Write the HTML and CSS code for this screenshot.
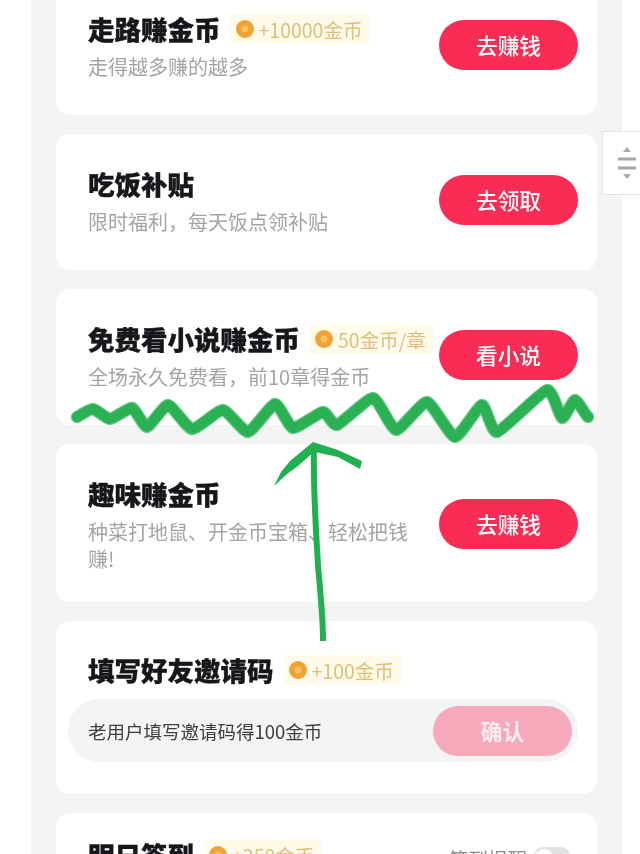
FILE: index.html
```html
<!DOCTYPE html>
<html lang="zh-CN">
<head>
<meta charset="utf-8">
<title>赚金币任务</title>
<link rel="stylesheet" href="styles.css">
</head>
<body>
<main class="panel">
  <div class="list">
    <section class="card">
      <div class="task">
        <div class="info">
          <div class="head"><h2 class="title">走路赚金币</h2><span class="tag"><i class="coin"></i>+10000金币</span></div>
          <p class="sub">走得越多赚的越多</p>
        </div>
        <button class="btn">去赚钱</button>
      </div>
    </section>
    <section class="card">
      <div class="task">
        <div class="info">
          <div class="head"><h2 class="title">吃饭补贴</h2></div>
          <p class="sub">限时福利&#xFF0C;每天饭点领补贴</p>
        </div>
        <button class="btn">去领取</button>
      </div>
    </section>
    <section class="card">
      <div class="task">
        <div class="info">
          <div class="head"><h2 class="title">免费看小说赚金币</h2><span class="tag"><i class="coin"></i>50金币/章</span></div>
          <p class="sub">全场永久免费看&#xFF0C;前10章得金币</p>
        </div>
        <button class="btn">看小说</button>
      </div>
    </section>
    <section class="card">
      <div class="task">
        <div class="info">
          <div class="head"><h2 class="title">趣味赚金币</h2></div>
          <p class="sub">种菜打地鼠、开金币宝箱、轻松把钱赚!</p>
        </div>
        <button class="btn">去赚钱</button>
      </div>
    </section>
    <section class="card card-form">
      <div class="head"><h2 class="title">填写好友邀请码</h2><span class="tag"><i class="coin"></i>+100金币</span></div>
      <div class="code">
        <span class="code-hint">老用户填写邀请码得100金币</span>
        <button class="btn btn-off">确认</button>
      </div>
    </section>
    <section class="card card-form card-sign">
      <div class="sign">
        <div class="head"><h2 class="title">明日签到</h2><span class="tag"><i class="coin"></i>+350金币</span></div>
        <div class="remind"><span>签到提醒</span><i class="switch"></i></div>
      </div>
    </section>
  </div>
</main>
<aside class="handle" aria-hidden="true">
  <svg width="26" height="40" viewBox="0 0 26 40">
    <path d="M13 4l4 5H9z" fill="#a9a9a9"/>
    <path d="M4 16h18M4 25h18" stroke="#a6a6a6" stroke-width="3"/>
    <path d="M13 36l-4-5h8z" fill="#a9a9a9"/>
  </svg>
</aside>
<svg class="scribble" width="640" height="854" viewBox="0 0 640 854" aria-hidden="true">
  <path class="zig-halo" d="M77 417S90.200 408.900 93 409S106.800 419.100 110 419S128.900 407.400 132 408S144 427.200 147 427S164.200 404.900 168 405S187.400 428.600 192 429S218.400 409.700 223 410S243.600 432.500 248 432S271.200 404.400 275 404S289 427.400 293 428S319.400 412.200 323 412S332.900 426.200 337 425S368.100 397.600 373 398S391.500 429.600 396 430S422.100 401.400 427 402S450.400 436.800 455 437S478.500 405.400 482 405S491.600 433.200 497 432S541.600 391.200 547 390S559.700 417.200 562 418S572.800 400.100 575 400S585 414 588 417"/>
  <path class="zig" d="M77 417S90.200 408.900 93 409S106.800 419.100 110 419S128.900 407.400 132 408S144 427.200 147 427S164.200 404.900 168 405S187.400 428.600 192 429S218.400 409.700 223 410S243.600 432.500 248 432S271.200 404.400 275 404S289 427.400 293 428S319.400 412.200 323 412S332.900 426.200 337 425S368.100 397.600 373 398S391.500 429.600 396 430S422.100 401.400 427 402S450.400 436.800 455 437S478.500 405.400 482 405S491.600 433.200 497 432S541.600 391.200 547 390S559.700 417.200 562 418S572.800 400.100 575 400S585 414 588 417"/>
  <path class="arrow-stem" d="M314 446C313 490 316 530 318 565C320 590 323 615 323 641"/>
  <path class="arrow-head" d="M313 442L316 450L298 466L287 474L274 486L281 472L290 461Z"/>
  <path class="arrow-head" d="M313 442L338 450L362 461L360 469L338 457L315 452Z"/>
</svg>
</body>
</html>
```
FILE: styles.css
```css
* { box-sizing: border-box; }
html, body { margin: 0; height: 854px; overflow: hidden; background: #fff; }
body { font-family: "Noto Sans CJK SC", "Noto Sans", sans-serif; position: relative; }

.panel { width: 591px; height: 854px; margin-left: 31px; padding: 0 25px; background: #f4f4f4; overflow: hidden; filter: blur(0.5px); }
.list { display: flex; flex-direction: column; gap: 19px; margin-top: -21px; }

.card { background: #fff; border-radius: 14px; min-height: 136px; padding: 32px 19px 30.5px 32px; }
.card-form { padding: 31px 19px 32px 12px; }
.card-form .head { padding-left: 20px; }
.card-sign { padding-top: 24px; }

.task { display: flex; align-items: center; gap: 20px; }
.info { flex: 1; min-width: 0; }

.head { display: flex; align-items: center; height: 36px; margin-bottom: 5.5px; }
.title { margin: 0; font-size: 26.5px; line-height: 36px; font-weight: 900; color: #16171b; white-space: nowrap; -webkit-text-stroke: 0.35px #16171b; }
.tag { display: flex; align-items: center; height: 30px; margin-left: 10px; padding: 0 7px 0 5px; background: #fffaea; font-size: 19.5px; color: #dcc07c; white-space: nowrap; }
.coin { flex: none; width: 18px; height: 18px; margin-right: 5px; border-radius: 50%; background: radial-gradient(circle, #f6c25f 0 3px, #f0a233 4px); }
.sub { margin: 0; font-size: 20px; line-height: 27px; color: #a4a4a4; }

.btn { flex: none; width: 139px; height: 50px; padding: 0; border: 0; border-radius: 25px; background: #f82c54; color: #fff; font: 500 21.7px/50px "Noto Sans CJK SC", sans-serif; }
.btn-off { background: #f7a9bc; color: #fdeef2; font-weight: 700; }

.code { display: flex; align-items: center; justify-content: space-between; height: 63px; margin-top: 11px; padding: 0 6px 0 20px; border-radius: 31.5px; background: #f4f4f4; }
.code-hint { font-size: 18.5px; color: #3d3d3d; }

.sign { display: flex; align-items: center; justify-content: space-between; }
.sign .head { margin-bottom: 0; }
.remind { display: flex; align-items: center; gap: 6px; margin: 6px 7px 0 0; font-size: 19.5px; color: #8a8a8a; }
.switch { width: 38px; height: 22px; border-radius: 11px; background: #e2e2e2; position: relative; }
.switch::before { content: ""; position: absolute; left: 2px; top: 2px; width: 18px; height: 18px; border-radius: 50%; background: #fff; }

.handle { position: absolute; right: 0; top: 131px; display: flex; align-items: center; padding-left: 11px; width: 38px; height: 64px; background: #fff; border: 1px solid #e4e4e4; border-right: 0; filter: blur(0.5px); }

.scribble { position: absolute; left: 0; top: 0; pointer-events: none; filter: blur(0.4px); }
.zig-halo { fill: none; stroke: #6ccb88; stroke-width: 12.5; stroke-linecap: round; }
.zig { fill: none; stroke: #2bb154; stroke-width: 10; stroke-linecap: round; stroke-dasharray: 11 1; }
.arrow-stem { fill: none; stroke: #21b04f; stroke-width: 6; }
.arrow-head { fill: #21b04f; }
```
